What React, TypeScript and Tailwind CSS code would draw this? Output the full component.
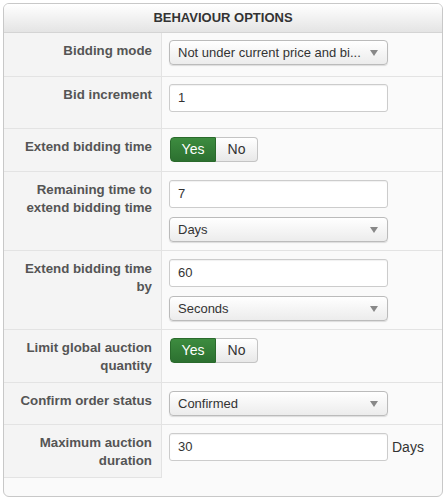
const font = { fontFamily: '"Liberation Sans", Arial, sans-serif' };

function Select({ value }: { value: string }) {
  return (
    <div className="flex h-[25px] w-[219px] items-center justify-between rounded-[4px] border border-[#bbb] bg-[linear-gradient(#ffffff,#ececec)] pl-[8px] pr-[9px] text-[13px] text-[#333] shadow-[0_1px_1px_rgba(0,0,0,0.12)]">
      <span className="truncate">{value}</span>
      <span className="ml-2 h-0 w-0 border-x-[4px] border-t-[6px] border-x-transparent border-t-[#888]" />
    </div>
  );
}

function TextInput({ value }: { value: string }) {
  return (
    <div className="flex h-[28px] w-[219px] items-center rounded-[3px] border border-[#ccc] bg-white pl-[8px] text-[13px] text-[#333] shadow-[inset_0_1px_1px_rgba(0,0,0,0.06)]">
      {value}
    </div>
  );
}

function YesNo() {
  return (
    <div className="ml-[1px] flex h-[25px] text-[14px]">
      <div className="flex w-[46px] items-center justify-center rounded-l-[4px] border border-[#2a6a2c] bg-[linear-gradient(#3d8c3f,#2c7030)] text-white">
        Yes
      </div>
      <div className="flex w-[42px] items-center justify-center rounded-r-[4px] border border-l-0 border-[#c4c4c4] bg-[linear-gradient(#ffffff,#e8e8e8)] text-[#333]">
        No
      </div>
    </div>
  );
}

function Row({
  label,
  children,
  last,
  fieldClass = 'pt-[8px] pb-[9px]',
}: {
  label: React.ReactNode;
  children: React.ReactNode;
  last?: boolean;
  fieldClass?: string;
}) {
  return (
    <div className={`grid grid-cols-[158px_1fr] ${last ? '' : 'border-b border-[#e3e3e3]'}`}>
      <div
        className={`border-r border-[#e3e3e3] bg-[#f4f4f4] pb-[7px] pr-[9px] pt-[9px] text-right text-[13.3px] font-bold leading-[18px] text-[#555] ${
          last ? 'border-b' : ''
        }`}
      >
        {label}
      </div>
      <div className={`flex flex-col gap-[9px] pl-[7px] ${fieldClass}`}>{children}</div>
    </div>
  );
}

export default function App() {
  return (
    <div className="p-[3px]" style={font}>
      <div className="w-[440px] overflow-hidden rounded-[6px] border border-[#c8c8c8] bg-[#fafafa] pb-[18px]">
        {/* Header */}
        <div className="flex h-[29px] items-center justify-center border-b border-[#d4d4d4] bg-[linear-gradient(#ffffff,#e4e4e4)] text-[13px] font-bold text-[#333]">
          BEHAVIOUR OPTIONS
        </div>

        <Row label="Bidding mode" fieldClass="pt-[7px] pb-[11px]">
          <Select value="Not under current price and bi..." />
        </Row>
        <Row label="Bid increment" fieldClass="pt-[7px] pb-[16px]">
          <TextInput value="1" />
        </Row>
        <Row label="Extend bidding time">
          <YesNo />
        </Row>
        <Row label={<>Remaining time to<br />extend bidding time</>} fieldClass="pt-[8px] pb-[8px]">
          <TextInput value="7" />
          <Select value="Days" />
        </Row>
        <Row label={<>Extend bidding time<br />by</>} fieldClass="pt-[8px] pb-[8px]">
          <TextInput value="60" />
          <Select value="Seconds" />
        </Row>
        <Row label={<>Limit global auction<br />quantity</>}>
          <YesNo />
        </Row>
        <Row label="Confirm order status" fieldClass="pt-[8px] pb-[8px]">
          <Select value="Confirmed" />
        </Row>
        <Row label={<>Maximum auction<br />duration</>} last>
          <div className="flex items-center gap-[4px]">
            <TextInput value="30" />
            <span className="text-[14px] text-[#333]">Days</span>
          </div>
        </Row>
      </div>
    </div>
  );
}
